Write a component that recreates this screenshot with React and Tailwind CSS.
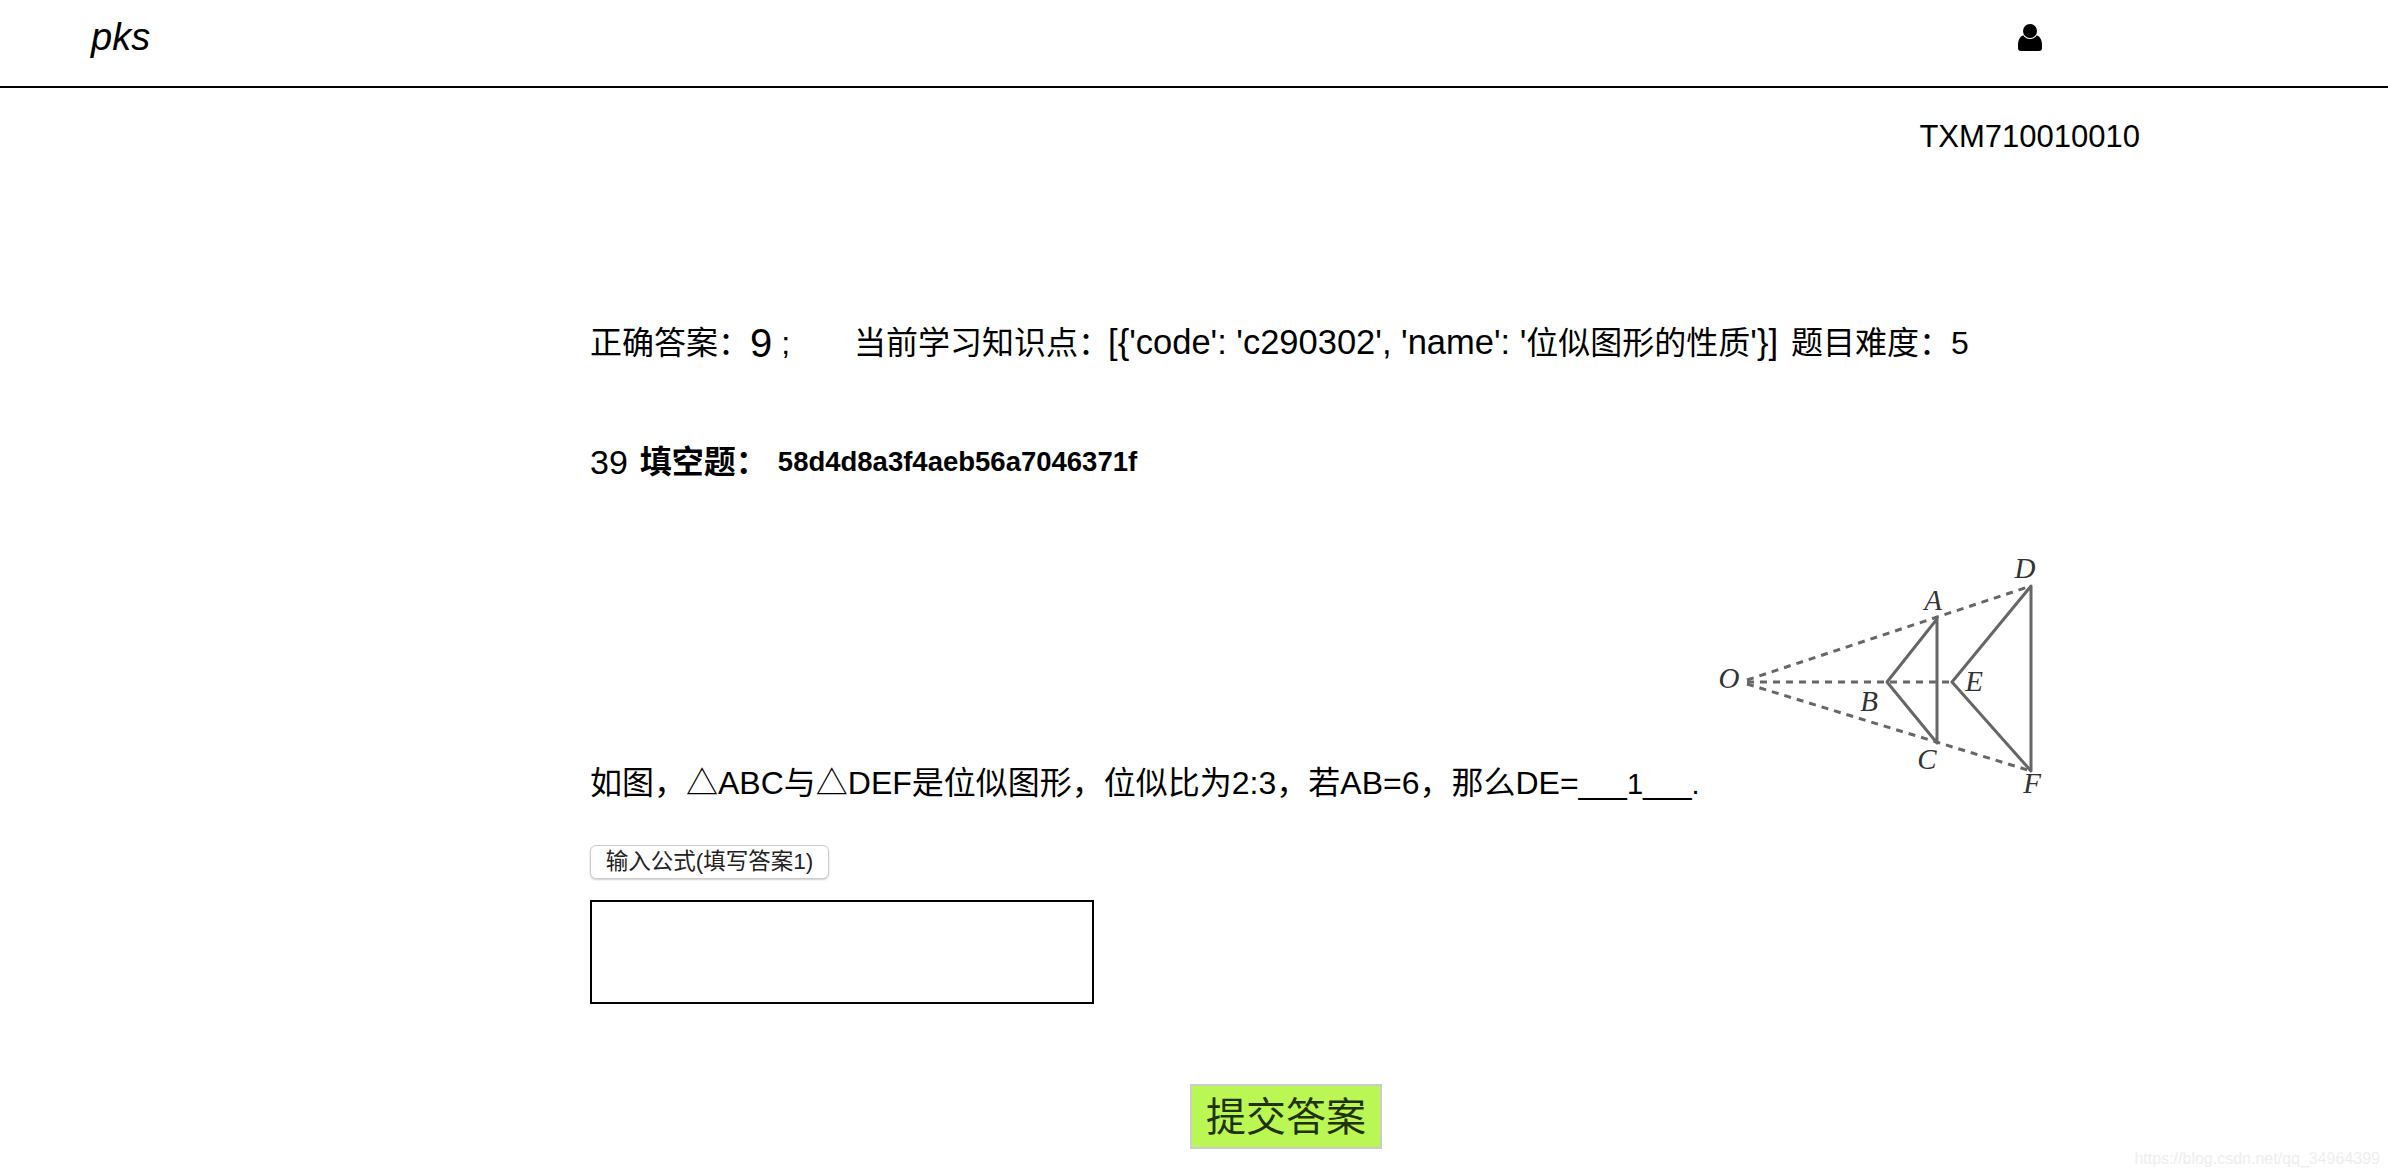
import React from "react";

const SANS = "font-['Liberation_Sans','Noto_Sans_CJK_SC',sans-serif]";

// Person glyph in the navbar
const UserIcon = () => (
  <svg width="24" height="27" viewBox="0 0 24 27" className="block">
    <path d="M0 21 C0 15 3 11 7 11 L17 11 C21 11 24 15 24 21 L24 24 C24 26 23 27 21 27 L3 27 C1 27 0 26 0 24 Z" fill="#000" />
    <circle cx="12" cy="7" r="8" fill="#fff" />
    <circle cx="12" cy="7" r="7" fill="#000" />
  </svg>
);

// Similar triangles figure next to the question
const Figure = () => {
  const labels = [
    ["O", 29, 132],
    ["A", 233, 54],
    ["D", 325, 22],
    ["B", 169, 155],
    ["E", 274, 135],
    ["C", 227, 213],
    ["F", 332, 237],
  ];
  return (
    <svg width="360" height="260" viewBox="0 -10 360 260" className="block shrink-0">
      <g stroke="#666" strokeWidth="3" fill="none" strokeDasharray="7 6">
        <path d="M47 124 L331 30" />
        <path d="M47 126 L252 126" />
        <path d="M47 128 L331 215" />
      </g>
      <g stroke="#666" strokeWidth="3" fill="none" strokeLinejoin="round">
        <path d="M237 63 L187 126 L237 187 Z" />
        <path d="M331 30 L252 126 L331 215 Z" />
      </g>
      <g fill="#333" fontSize="29" fontStyle="italic" fontFamily="'Liberation Serif', serif">
        {labels.map(([t, x, y]) => (
          <text key={t} x={x} y={y} textAnchor="middle">
            {t}
          </text>
        ))}
      </g>
    </svg>
  );
};

export default function App() {
  return (
    <div className={`${SANS} relative h-[1176px] overflow-hidden bg-white text-black`}>
      <nav className="flex h-[88px] items-center justify-between border-b-2 border-black pb-[12px] pl-[91px] pr-[346px]">
        <span className="text-[38px] italic leading-[72px]">pks</span>
        <UserIcon />
      </nav>

      <div className="pr-[248px] pt-[29px] text-right text-[31px] leading-[40px]">TXM710010010</div>

      <div className="pl-[590px] text-[32px]">
        <p className="mt-[155px] flex items-center whitespace-pre leading-[60px]">
          <span>正确答案：</span>
          <span className="text-[40px]">9</span>
          <span> ;</span>
          <span className="ml-[64px]">
            当前学习知识点：
            <span className="ml-[-2px] text-[34.5px]">[{"{"}'code': 'c290302', 'name': '</span>
            位似图形的性质
            <span className="text-[34.5px]">'{"}"}]</span>
            <span className="ml-[4px]"> 题目难度：5</span>
          </span>
        </p>

        <p className="mt-[59px] flex items-center whitespace-pre leading-[60px]">
          <span className="text-[34px]">39</span>
          <b className="ml-[12px]">填空题：</b>
          <b className="ml-[10px] text-[27.5px]">58d4d8a3f4aeb56a7046371f</b>
        </p>

        <div className="mt-[54px] flex items-end">
          <span className="leading-[44px]">
            如图，△ABC与△DEF是位似图形，位似比为2:3，若AB=6，那么DE=<span className="text-[29px]">___1___.</span>
          </span>
          <Figure />
        </div>

        <button className="mt-[39px] block h-[34px] w-[239px] rounded-[6px] border border-[#ccc] bg-white text-[22.5px] leading-[30px] text-[#222] shadow-[0_1px_2px_rgba(0,0,0,0.2)]">
          输入公式(填写答案1)
        </button>

        <div className="mt-[21px] h-[104px] w-[504px] border-2 border-black" />

        <button className="ml-[600px] mt-[80px] block h-[65px] w-[192px] border-2 border-[#ccc] bg-[#bbf754] text-[40px] leading-[58px] text-[#1f3300]">
          提交答案
        </button>
      </div>

      {/* watermark */}
      <span className="absolute bottom-[7px] right-[8px] text-[16px] leading-[20px] text-[#eeeeee]">
        https://blog.csdn.net/qq_34964399
      </span>
    </div>
  );
}
